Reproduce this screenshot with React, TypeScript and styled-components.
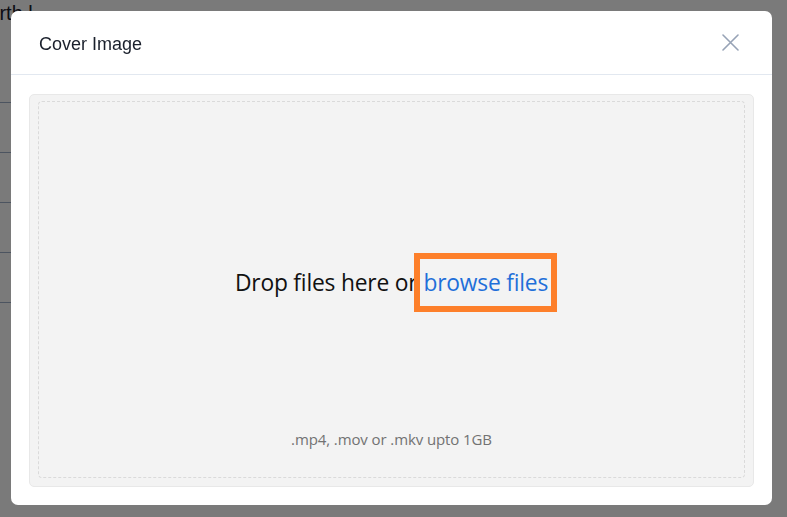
import React from "react";
import styled, { createGlobalStyle } from "styled-components";

const Global = createGlobalStyle`
  html, body { margin: 0; padding: 0; }
  body {
    width: 787px;
    height: 517px;
    overflow: hidden;
    background: #ffffff;
    font-family: "Liberation Sans", Arial, sans-serif;
  }
`;

/* ---------- page behind the dialog ---------- */

const Page = styled.div`
  display: flex;
  flex-direction: column;
  margin-left: -62px;
  width: 820px;
  color: #1a202c;
  font-size: 17px;
`;

const PageTitle = styled.div`
  height: 22px;
  line-height: 24px;
  font-size: 20px;
  margin-top: 1px;
  padding-left: 37px;
`;

const Meta = styled.div`
  display: flex;
  flex-direction: column;
  gap: 6px;
  padding-top: 26px;
  line-height: 19px;
  font-size: 19px;
  color: #22508a;
`;

const Row = styled.div`
  height: 49px;
  border-top: 1px solid #9fb0c8;
`;

const FirstRow = styled(Row)`
  margin-top: 9px;
`;

const Overlay = styled.div`
  position: fixed;
  inset: 0;
  background: rgba(0, 0, 0, 0.52);
  display: flex;
  padding: 11px 15px 12px 11px;
`;

/* ---------- dialog ---------- */

const Modal = styled.div`
  flex: 1;
  display: flex;
  flex-direction: column;
  background: #ffffff;
  border-radius: 7px;
  overflow: hidden;
`;

const Header = styled.div`
  height: 64px;
  box-sizing: border-box;
  flex: none;
  display: flex;
  align-items: center;
  justify-content: space-between;
  padding: 0 30px 0 28px;
  border-bottom: 1px solid #e2e8f0;
`;

const Title = styled.h2`
  margin: 0;
  font-family: "Liberation Sans", Arial, sans-serif;
  font-weight: 400;
  font-size: 18px;
  color: #1a202c;
  padding-top: 3px;
`;

const Close = styled.button`
  width: 24px;
  height: 24px;
  padding: 0;
  border: none;
  background: none;
  display: flex;
  align-items: center;
  justify-content: center;
  color: #97a3b6;
  cursor: pointer;
`;

const Body = styled.div`
  flex: 1;
  display: flex;
  padding: 19px 18px 18px;
`;

const Dropzone = styled.div`
  flex: 1;
  display: flex;
  padding: 6px 8px 8px;
  background: #f3f3f3;
  border: 1px solid #e8e8e8;
  border-radius: 5px;
`;

const DashedArea = styled.div`
  flex: 1;
  display: flex;
  flex-direction: column;
  border: 1px dashed #dadada;
  border-radius: 4px;
`;

const Prompt = styled.div`
  flex: 1;
  display: flex;
  align-items: center;
  justify-content: center;
  padding-top: 34px;
  font-family: "Open Sans", "Noto Sans", sans-serif;
  font-size: 22.8px;
  letter-spacing: -0.2px;
  color: #111111;
`;

const Browse = styled.span`
  display: inline-block;
  padding: 4px 0;
  line-height: 33px;
  margin-left: 6px;
  color: #1f6fd9;
  cursor: pointer;
  outline: 6px solid #fd7f2a;
  outline-offset: 3px;
`;

const Hint = styled.div`
  text-align: center;
  line-height: 20px;
  padding-bottom: 28px;
  font-family: "Open Sans", "Noto Sans", sans-serif;
  font-size: 15px;
  letter-spacing: -0.1px;
  color: #727272;
`;

const CloseIcon = () => (
  <svg width="17" height="17" viewBox="0 0 17 17" fill="none">
    <path d="M1 1 L16 16 M16 1 L1 16" stroke="currentColor" strokeWidth="1.6" strokeLinecap="round" />
  </svg>
);

export default function App() {
  return (
    <>
      <Global />
      <Page>
        <PageTitle>Earth l</PageTitle>
        <Meta>
          <span>Solar</span>
          <span>Global</span>
        </Meta>
        <FirstRow />
        <Row />
        <Row />
        <Row />
        <Row />
      </Page>
      <Overlay>
        <Modal role="dialog" aria-label="Cover Image">
          <Header>
            <Title>Cover Image</Title>
            <Close aria-label="Close">
              <CloseIcon />
            </Close>
          </Header>
          <Body>
            <Dropzone>
              <DashedArea>
                <Prompt>
                  <span>Drop files here or</span>
                  <Browse>browse files</Browse>
                </Prompt>
                <Hint>.mp4, .mov or .mkv upto 1GB</Hint>
              </DashedArea>
            </Dropzone>
          </Body>
        </Modal>
      </Overlay>
    </>
  );
}
